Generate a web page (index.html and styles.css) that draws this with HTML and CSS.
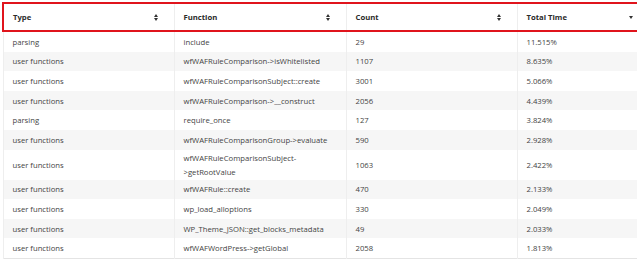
FILE: index.html
```html
<!DOCTYPE html>
<html lang="en">
<head>
  <meta charset="UTF-8" />
  <title>Profiler</title>
  <link rel="stylesheet" href="styles.css">
</head>
<body>
  <table class="prof">
    <colgroup>
      <col class="c1"><col class="c2"><col class="c3"><col class="c4">
    </colgroup>
    <thead>
      <tr>
        <th class="first">Type <span class="sort"></span></th>
        <th>Function <span class="sort"></span></th>
        <th>Count <span class="sort"></span></th>
        <th class="last">Total Time <span class="sort desc"></span></th>
      </tr>
    </thead>
    <tbody>
      <tr><td>parsing</td><td>include</td><td>29</td><td>11.515%</td></tr>
      <tr><td>user functions</td><td>wfWAFRuleComparison-&gt;isWhitelisted</td><td>1107</td><td>8.635%</td></tr>
      <tr><td>user functions</td><td>wfWAFRuleComparisonSubject::create</td><td>3001</td><td>5.066%</td></tr>
      <tr><td>user functions</td><td>wfWAFRuleComparison-&gt;__construct</td><td>2056</td><td>4.439%</td></tr>
      <tr><td>parsing</td><td>require_once</td><td>127</td><td>3.824%</td></tr>
      <tr><td>user functions</td><td>wfWAFRuleComparisonGroup-&gt;evaluate</td><td>590</td><td>2.928%</td></tr>
      <tr class="tall"><td>user functions</td><td>wfWAFRuleComparisonSubject-<br>&gt;getRootValue</td><td>1063</td><td>2.422%</td></tr>
      <tr><td>user functions</td><td>wfWAFRule::create</td><td>470</td><td>2.133%</td></tr>
      <tr><td>user functions</td><td>wp_load_alloptions</td><td>330</td><td>2.049%</td></tr>
      <tr><td>user functions</td><td>WP_Theme_JSON::get_blocks_metadata</td><td>49</td><td>2.033%</td></tr>
      <tr><td>user functions</td><td>wfWAFWordPress-&gt;getGlobal</td><td>2058</td><td>1.813%</td></tr>
    </tbody>
  </table>
</body>
</html>
```
FILE: styles.css
```css
body {
  margin: 2px;
  background: #fff;
  font-family: 'Open Sans', sans-serif;
  font-size: 7.7px;
  color: #444;
}
.prof {
  width: 635px;
  border-collapse: collapse;
  table-layout: fixed;
  border-left: 1px solid #e4e4e4;
  border-right: 1px solid #e4e4e4;
  border-bottom: 1px solid #e4e4e4;
}
.prof .c1 { width: 171px; }
.prof .c2 { width: 172px; }
.prof .c3 { width: 171px; }
.prof .c4 { width: 121px; }
.prof th {
  position: relative;
  height: 26px;
  padding: 0 9px;
  text-align: left;
  font-weight: 700;
  color: #2b2b2b;
  border-top: 2px solid #e0141c;
  border-bottom: 2px solid #e0141c;
  border-left: 1px solid #eee;
}
.prof th.first { border-left: 2px solid #e0141c; }
.prof th.last { border-right: 2px solid #e0141c; }
.sort {
  position: absolute;
  right: 18px;
  top: 10px;
  width: 0;
  height: 0;
}
.sort::before, .sort::after {
  content: '';
  position: absolute;
  left: -2px;
  border-left: 2.5px solid transparent;
  border-right: 2.5px solid transparent;
}
.sort::before {
  top: 0;
  border-bottom: 3px solid #333;
}
.sort::after {
  top: 4px;
  border-top: 3px solid #333;
}
.sort.desc { right: 6px; }
.sort.desc::before { display: none; }
.sort.desc::after { top: 2px; }
.prof td {
  height: 19.6px;
  padding: 0 9px;
  border-left: 1px solid #eee;
  line-height: 14px;
}
.prof tbody tr:nth-child(even) td {
  background: #f6f6f6;
}
.prof tr.tall td {
  height: 30px;
}
```
